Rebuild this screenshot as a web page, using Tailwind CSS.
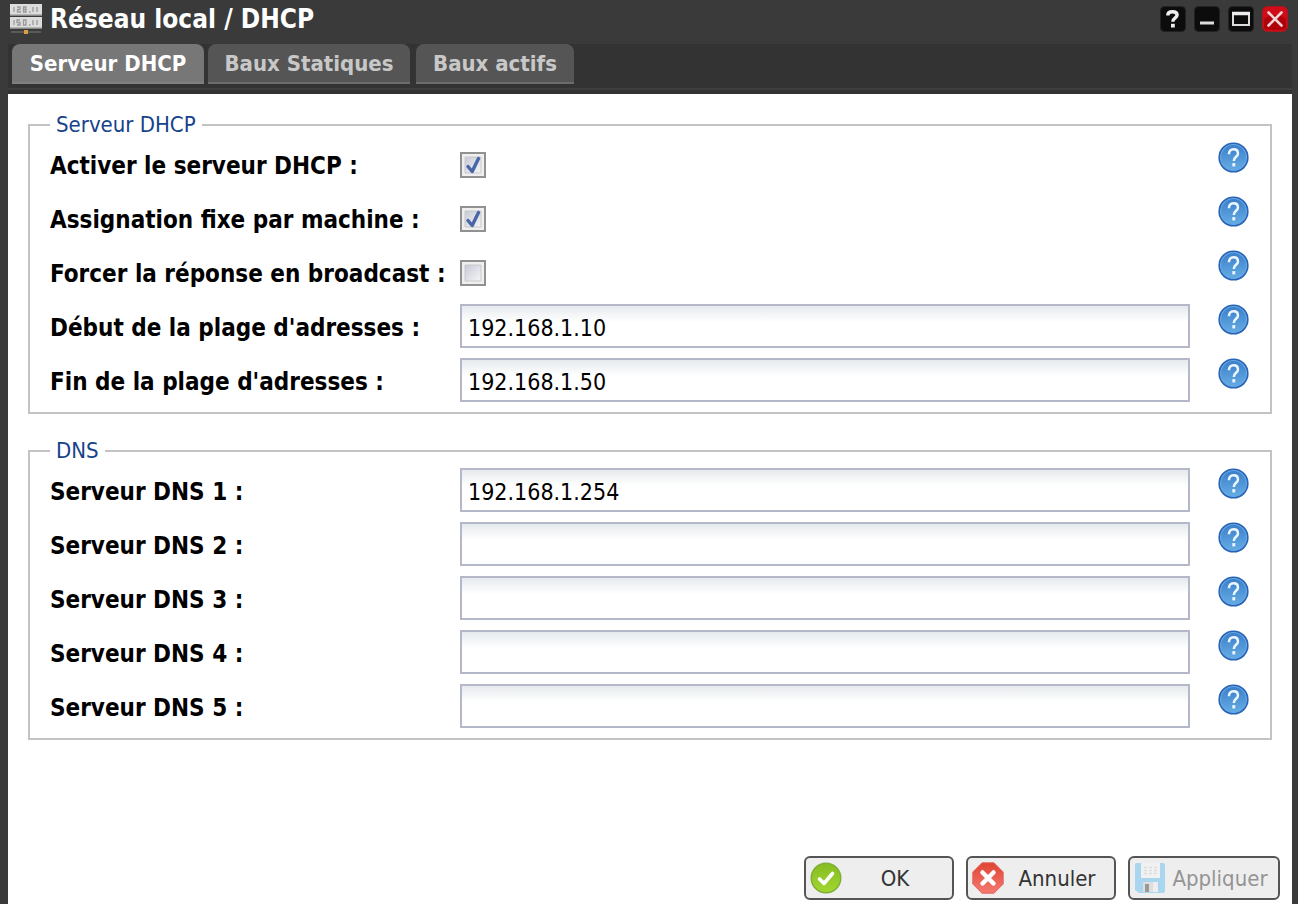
<!DOCTYPE html>
<html lang="fr">
<head>
<meta charset="utf-8">
<meta name="viewport" content="width=device-width, initial-scale=1">
<title>Réseau local / DHCP</title>
<script src="https://cdn.jsdelivr.net/npm/@tailwindcss/browser@4"></script>
</head>
<body class="flex min-h-screen flex-col bg-[#3a3a3a] pr-1.5 pl-2 font-['DejaVu_Sans_Condensed','DejaVu_Sans',sans-serif]">

<svg class="absolute size-0" aria-hidden="true">
  <defs>
    <linearGradient id="blue" x1="0" y1="0" x2="0" y2="1"><stop offset="0" stop-color="#3b7fcb"/><stop offset="1" stop-color="#64ace3"/></linearGradient>
    <linearGradient id="green" x1="0" y1="0" x2="0" y2="1"><stop offset="0" stop-color="#86bd22"/><stop offset="1" stop-color="#a2d62e"/></linearGradient>
    <linearGradient id="red" x1="0" y1="0" x2="0" y2="1"><stop offset="0" stop-color="#e04434"/><stop offset="1" stop-color="#f57a70"/></linearGradient>
    <linearGradient id="box" x1="0" y1="0" x2="1" y2="1"><stop offset="0" stop-color="#c6cad6"/><stop offset="1" stop-color="#f6f6f6"/></linearGradient>
    <symbol id="help" viewBox="0 0 32 32">
      <circle cx="16" cy="16" r="15.6" fill="#2464b8"/>
      <circle cx="16" cy="16" r="13.4" fill="url(#blue)" stroke="#6ba6e0" stroke-width="1.2"/>
      <path d="M11.3 12.600C11.300 9.200 13 7.600 16 7.600c3 0 4.600 1.700 4.600 4.200 0 3.600-4.300 3.400-4.300 7.800" fill="none" stroke="#eef6ff" stroke-width="2.600"/>
      <path d="M14.800 21.800h3v3.400h-3z" fill="#eef6ff"/>
    </symbol>
    <symbol id="tick" viewBox="0 0 26 26">
      <path d="M8 14.500l4.200 5L18.500 6.500" fill="none" stroke="#4a66a8" stroke-width="3.400" stroke-linecap="round" stroke-linejoin="round"/>
    </symbol>
    <symbol id="square" viewBox="0 0 26 26">
      <path d="M5 5h16v16H5z" fill="url(#box)" stroke="#c8c8cc"/>
    </symbol>
  </defs>
</svg>

<header class="flex h-11 items-start">
  <svg class="mt-1 ml-0.5 size-8 shrink-0" viewBox="0 0 32 32" aria-hidden="true">
    <path d="M0 0h32v11H0zM0 13h32v11H0z" fill="#dcdcdc"/>
    <path d="M0 11h32M0 24h32" stroke="#a5a5a5" stroke-width="1.500"/>
    <path d="M4 3v5M7 3h3v2.500H7.500V8H11M13.500 3H16v5h-2.500zM13.500 5.500H16M19 8h1.500M23 3v5M27 3v5M4 16v5M10 16H7v2.500h3V21H7M13.500 16H16v5h-2.500zM19 21h1.500M23 16v5M27 16v5" fill="none" stroke="#999" stroke-width="1.300"/>
    <path d="M1 28h30" stroke="#666" stroke-width="1.500"/>
    <path d="M14 26h4v4h-4z" fill="#d8a03c"/>
  </svg>
  <h1 class="ml-2 pt-1 text-[26px] leading-[30px] font-bold text-white">Réseau local / DHCP</h1>
  <div class="mt-1.5 mr-1 ml-auto flex gap-2">
    <button type="button" aria-label="Aide"><svg class="size-[26px]" viewBox="0 0 26 26"><rect x=".5" y=".5" width="25" height="25" rx="4" fill="#0c0c0c" stroke="#222"/><path d="M7.800 9.400c0-2.800 1.900-3.700 4.700-3.700 2.900 0 4.600 1.200 4.600 3.400 0 2.800-4.300 2.700-4.300 6.700" fill="none" stroke="#eee" stroke-width="3.400"/><path d="M11 17.800h3.800v3.700H11z" fill="#eee"/></svg></button>
    <button type="button" aria-label="Réduire"><svg class="size-[26px]" viewBox="0 0 26 26"><rect x=".5" y=".5" width="25" height="25" rx="4" fill="#0c0c0c" stroke="#222"/><path d="M6 17h14" stroke="#ddd" stroke-width="3"/></svg></button>
    <button type="button" aria-label="Agrandir"><svg class="size-[26px]" viewBox="0 0 26 26"><rect x=".5" y=".5" width="25" height="25" rx="4" fill="#0c0c0c" stroke="#222"/><path d="M4 19h18M5 7v12M21 7v12" stroke="#ddd" stroke-width="2"/><path d="M4 7.500h18" stroke="#eee" stroke-width="3.500"/></svg></button>
    <button type="button" aria-label="Fermer"><svg class="size-[26px]" viewBox="0 0 26 26"><rect x=".5" y=".5" width="25" height="25" rx="5" fill="#d00c18" stroke="#a81820"/><path d="M2 13Q13 5 24 13v7q0 4-4 4H6q-4 0-4-4z" fill="#b0000a"/><path d="M6.500 6.500l13 13M19.500 6.500l-13 13" stroke="#f0d4d4" stroke-width="2.600" stroke-linecap="round"/></svg></button>
  </div>
</header>

<nav class="bg-[#333]">
  <div class="flex h-11 items-start px-1 text-[22px] leading-10 font-bold text-[#c8c8c8]">
    <button type="button" class="h-10 w-48 rounded-t-lg border-b-2 border-[#808080] bg-[#777] text-white">Serveur DHCP</button>
    <button type="button" class="ml-1 h-10 w-[202px] rounded-t-lg border-b-2 border-[#6c6c6c] bg-[#555]">Baux Statiques</button>
    <button type="button" class="ml-1.5 h-10 w-[158px] rounded-t-lg border-b-2 border-[#6c6c6c] bg-[#555]">Baux actifs</button>
  </div>
  <div class="h-1.5 border-t-2 border-[#3e3e3e]"></div>
</nav>

<form class="flex flex-1 flex-col bg-white pt-[17px] pb-1 text-black">
  <fieldset class="mx-5 border-2 border-[#c3c3c3] pt-[3px] pr-[21px] pb-2.5 pl-5">
    <legend class="px-1.5 text-[22px] leading-7 text-[#15428b]">Serveur DHCP</legend>
    <div class="flex flex-col gap-2.5 text-[24px]">
      <div class="flex h-11 items-center">
        <label for="active" class="w-[410px] shrink-0 pt-1 font-bold whitespace-nowrap">Activer le serveur DHCP :</label>
        <span class="relative mt-0.5 size-[26px]"><input id="active" type="checkbox" checked class="peer block size-full appearance-none border-2 border-[#919191] bg-[#efefef]"><svg class="pointer-events-none absolute inset-0 size-full"><use href="#square"/></svg><svg class="pointer-events-none absolute inset-0 hidden size-full peer-checked:block"><use href="#tick"/></svg></span>
        <button type="button" aria-label="Aide" class="ml-auto self-start"><svg class="size-[31px]"><use href="#help"/></svg></button>
      </div>
      <div class="flex h-11 items-center">
        <label for="fixed" class="w-[410px] shrink-0 pt-1 font-bold whitespace-nowrap">Assignation fixe par machine :</label>
        <span class="relative mt-0.5 size-[26px]"><input id="fixed" type="checkbox" checked class="peer block size-full appearance-none border-2 border-[#919191] bg-[#efefef]"><svg class="pointer-events-none absolute inset-0 size-full"><use href="#square"/></svg><svg class="pointer-events-none absolute inset-0 hidden size-full peer-checked:block"><use href="#tick"/></svg></span>
        <button type="button" aria-label="Aide" class="ml-auto self-start"><svg class="size-[31px]"><use href="#help"/></svg></button>
      </div>
      <div class="flex h-11 items-center">
        <label for="broadcast" class="w-[410px] shrink-0 pt-1 font-bold whitespace-nowrap">Forcer la réponse en broadcast :</label>
        <span class="relative mt-0.5 size-[26px]"><input id="broadcast" type="checkbox" class="peer block size-full appearance-none border-2 border-[#919191] bg-[#efefef]"><svg class="pointer-events-none absolute inset-0 size-full"><use href="#square"/></svg><svg class="pointer-events-none absolute inset-0 hidden size-full peer-checked:block"><use href="#tick"/></svg></span>
        <button type="button" aria-label="Aide" class="ml-auto self-start"><svg class="size-[31px]"><use href="#help"/></svg></button>
      </div>
      <div class="flex h-11 items-center">
        <label for="start" class="w-[410px] shrink-0 pt-1 font-bold whitespace-nowrap">Début de la plage d'adresses :</label>
        <input id="start" type="text" value="192.168.1.10" class="h-11 min-w-0 flex-1 border-2 border-[#b5b8c8] bg-linear-to-b from-[#e6eaed] to-white to-40% px-1.5 pt-1 text-[23px]">
        <button type="button" aria-label="Aide" class="ml-7 self-start"><svg class="size-[31px]"><use href="#help"/></svg></button>
      </div>
      <div class="flex h-11 items-center">
        <label for="end" class="w-[410px] shrink-0 pt-1 font-bold whitespace-nowrap">Fin de la plage d'adresses :</label>
        <input id="end" type="text" value="192.168.1.50" class="h-11 min-w-0 flex-1 border-2 border-[#b5b8c8] bg-linear-to-b from-[#e6eaed] to-white to-40% px-1.5 pt-1 text-[23px]">
        <button type="button" aria-label="Aide" class="ml-7 self-start"><svg class="size-[31px]"><use href="#help"/></svg></button>
      </div>
    </div>
  </fieldset>

  <fieldset class="mx-5 mt-[23px] border-2 border-[#c3c3c3] pt-[3px] pr-[21px] pb-2.5 pl-5">
    <legend class="px-1.5 text-[22px] leading-7 text-[#15428b]">DNS</legend>
    <div class="flex flex-col gap-2.5 text-[24px]">
      <div class="flex h-11 items-center">
        <label for="dns1" class="w-[410px] shrink-0 pt-1 font-bold">Serveur DNS 1 :</label>
        <input id="dns1" type="text" value="192.168.1.254" class="h-11 min-w-0 flex-1 border-2 border-[#b5b8c8] bg-linear-to-b from-[#e6eaed] to-white to-40% px-1.5 pt-1 text-[23px]">
        <button type="button" aria-label="Aide" class="ml-7 self-start"><svg class="size-[31px]"><use href="#help"/></svg></button>
      </div>
      <div class="flex h-11 items-center">
        <label for="dns2" class="w-[410px] shrink-0 pt-1 font-bold">Serveur DNS 2 :</label>
        <input id="dns2" type="text" class="h-11 min-w-0 flex-1 border-2 border-[#b5b8c8] bg-linear-to-b from-[#e6eaed] to-white to-40% px-1.5 pt-1 text-[23px]">
        <button type="button" aria-label="Aide" class="ml-7 self-start"><svg class="size-[31px]"><use href="#help"/></svg></button>
      </div>
      <div class="flex h-11 items-center">
        <label for="dns3" class="w-[410px] shrink-0 pt-1 font-bold">Serveur DNS 3 :</label>
        <input id="dns3" type="text" class="h-11 min-w-0 flex-1 border-2 border-[#b5b8c8] bg-linear-to-b from-[#e6eaed] to-white to-40% px-1.5 pt-1 text-[23px]">
        <button type="button" aria-label="Aide" class="ml-7 self-start"><svg class="size-[31px]"><use href="#help"/></svg></button>
      </div>
      <div class="flex h-11 items-center">
        <label for="dns4" class="w-[410px] shrink-0 pt-1 font-bold">Serveur DNS 4 :</label>
        <input id="dns4" type="text" class="h-11 min-w-0 flex-1 border-2 border-[#b5b8c8] bg-linear-to-b from-[#e6eaed] to-white to-40% px-1.5 pt-1 text-[23px]">
        <button type="button" aria-label="Aide" class="ml-7 self-start"><svg class="size-[31px]"><use href="#help"/></svg></button>
      </div>
      <div class="flex h-11 items-center">
        <label for="dns5" class="w-[410px] shrink-0 pt-1 font-bold">Serveur DNS 5 :</label>
        <input id="dns5" type="text" class="h-11 min-w-0 flex-1 border-2 border-[#b5b8c8] bg-linear-to-b from-[#e6eaed] to-white to-40% px-1.5 pt-1 text-[23px]">
        <button type="button" aria-label="Aide" class="ml-7 self-start"><svg class="size-[31px]"><use href="#help"/></svg></button>
      </div>
    </div>
  </fieldset>

  <footer class="mt-auto flex justify-end gap-3 pt-6 pr-3 text-[22px] text-[#333]">
    <button type="button" class="flex h-11 w-[150px] items-center rounded-md border-2 border-[#555] bg-[#eee] pr-1 pl-1">
      <svg class="size-8 shrink-0" viewBox="0 0 32 32" aria-hidden="true"><circle cx="16" cy="16" r="15.500" fill="#7fae3a"/><circle cx="16" cy="16" r="14" fill="url(#green)"/><path d="M9.500 17l4.500 4.500 8.500-10" fill="none" stroke="#fff" stroke-width="3.600" stroke-linecap="round" stroke-linejoin="round"/></svg>
      <span class="flex-1 text-center">OK</span>
    </button>
    <button type="button" class="flex h-11 w-[150px] items-center rounded-md border-2 border-[#555] bg-[#eee] pr-1 pl-1">
      <svg class="size-8 shrink-0" viewBox="0 0 32 32" aria-hidden="true"><path d="M10 .8h12l9.200 9.200v12L22 31.200H10L.8 22V10z" fill="url(#red)" stroke="#e0645a"/><path d="M10.500 10.500l11 11M21.500 10.500l-11 11" stroke="#fff" stroke-width="4.500" stroke-linecap="round"/></svg>
      <span class="flex-1 text-center">Annuler</span>
    </button>
    <button type="button" disabled class="flex h-11 w-[152px] items-center rounded-md border-2 border-[#555] bg-[#eee] pr-1 pl-1 text-[#949494]">
      <svg class="size-8 shrink-0" viewBox="0 0 32 32" aria-hidden="true"><path d="M3 1h26q2 0 2 2v26q0 2-2 2H5l-4-3V3q0-2 2-2z" fill="#a9d5ee"/><path d="M7 1h19v15H7z" fill="#f1f1f1"/><path d="M10 5.500h13M10 8.500h13M10 11.500h13" stroke="#ddd" stroke-width="1.500" stroke-dasharray="3 2"/><path d="M9 20h15v10H9z" fill="#dedede"/><path d="M11 22h4v8h-4z" fill="#999"/><path d="M19 20h5v10h-5z" fill="#eee"/></svg>
      <span class="flex-1 text-center">Appliquer</span>
    </button>
  </footer>
</form>
</body>
</html>
